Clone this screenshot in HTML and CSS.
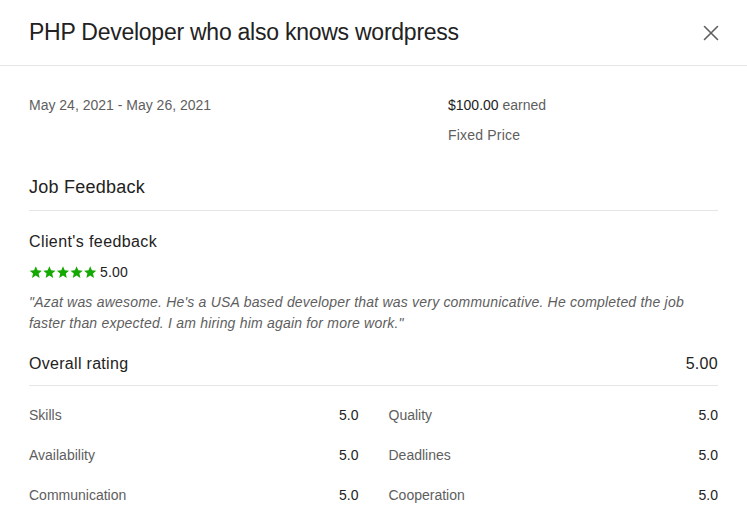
FILE: index.html
```html
<!DOCTYPE html>
<html>
<head>
<meta charset="utf-8">
<link rel="stylesheet" href="styles.css">
</head>
<body>
<div class="modal">
  <header class="head">
    <h1 class="title">PHP Developer who also knows wordpress</h1>
    <button class="close" aria-label="Close">
      <svg width="16" height="16" viewBox="0 0 16 16"><path d="M1.5 1.5 L14.5 14.5 M14.5 1.5 L1.5 14.5" stroke="#5f5f5f" stroke-width="1.6" fill="none" stroke-linecap="round"/></svg>
    </button>
  </header>
  <div class="body">
    <div class="meta">
      <div class="meta-left"><div class="muted">May 24, 2021 - May 26, 2021</div></div>
      <div class="meta-right">
        <div class="muted"><span class="strong">$100.00</span> earned</div>
        <div class="muted second">Fixed Price</div>
      </div>
    </div>
    <h2 class="section">Job Feedback</h2>
    <h3 class="sub">Client's feedback</h3>
    <div class="stars-row">
      <span class="stars">
        <svg width="68" height="13" viewBox="0 0 68 13">
          <defs><path id="s" d="M6.8 0.3 L8.5 4.3 L12.9 4.7 L9.6 7.6 L10.6 11.9 L6.8 9.6 L3 11.9 L4 7.6 L0.7 4.7 L5.1 4.3 Z"/></defs>
          <g fill="#14a800">
            <use href="#s" x="0"/><use href="#s" x="13.6"/><use href="#s" x="27.2"/><use href="#s" x="40.8"/><use href="#s" x="54.4"/>
          </g>
        </svg>
      </span>
      <span class="score">5.00</span>
    </div>
    <p class="quote">"Azat was awesome. He's a USA based developer that was very communicative. He completed the job faster than expected. I am hiring him again for more work."</p>
    <div class="overall">
      <span>Overall rating</span>
      <span>5.00</span>
    </div>
    <div class="grid">
      <div class="row"><span class="label">Skills</span><span class="val">5.0</span></div>
      <div class="row"><span class="label">Quality</span><span class="val">5.0</span></div>
      <div class="row"><span class="label">Availability</span><span class="val">5.0</span></div>
      <div class="row"><span class="label">Deadlines</span><span class="val">5.0</span></div>
      <div class="row"><span class="label">Communication</span><span class="val">5.0</span></div>
      <div class="row"><span class="label">Cooperation</span><span class="val">5.0</span></div>
    </div>
  </div>
</div>
</body>
</html>
```
FILE: styles.css
```css
* { box-sizing: border-box; }
html, body { margin: 0; padding: 0; background: #fff; }
body {
  font-family: "Liberation Sans", Arial, sans-serif;
  color: #222;
  width: 747px;
  height: 526px;
  overflow: hidden;
}
.head {
  height: 66px;
  border-bottom: 1px solid #e4e5e7;
  display: flex;
  align-items: center;
  justify-content: space-between;
  padding: 0 24px 0 29px;
}
.title {
  margin: 0;
  font-size: 23px;
  font-weight: 400;
  color: #222;
  letter-spacing: -0.25px;
}
.close {
  border: 0;
  background: none;
  padding: 0;
  width: 24px;
  height: 24px;
  display: flex;
  align-items: center;
  justify-content: center;
}
.body { padding: 0 29px; }
.meta {
  display: flex;
  padding-top: 29px;
}
.meta-left { width: 419px; flex: none; }
.meta-right { flex: 1; }
.muted { font-size: 14px; color: #5e5e5e; line-height: 20px; }
.strong { color: #222; }
.second { margin-top: 10px; letter-spacing: 0.2px; }
.section {
  margin: 30px 0 0;
  font-size: 18px;
  font-weight: 400;
  letter-spacing: 0.25px;
  line-height: 24px;
  padding-bottom: 11px;
  border-bottom: 1px solid #e4e5e7;
}
.sub {
  margin: 20px 0 0;
  font-size: 16px;
  font-weight: 400;
  letter-spacing: 0.4px;
  line-height: 22px;
}
.stars-row {
  display: flex;
  align-items: center;
  gap: 3px;
  margin-top: 9px;
  height: 20px;
}
.stars { display: flex; }
.score { font-size: 14px; color: #222; letter-spacing: 0.2px; }
.quote {
  margin: 10px 0 0;
  font-size: 14px;
  font-style: italic;
  line-height: 21px;
  letter-spacing: 0.2px;
  color: #5e5e5e;
}
.overall {
  display: flex;
  justify-content: space-between;
  font-size: 16px;
  letter-spacing: 0.3px;
  line-height: 22px;
  margin-top: 19px;
  padding-bottom: 10px;
  border-bottom: 1px solid #e4e5e7;
}
.grid {
  display: grid;
  grid-template-columns: 1fr 1fr;
  column-gap: 30px;
  padding-top: 9px;
}
.row {
  display: flex;
  justify-content: space-between;
  height: 40px;
  align-items: center;
  font-size: 14px;
}
.label { color: #5e5e5e; }
.val { color: #222; }
```
